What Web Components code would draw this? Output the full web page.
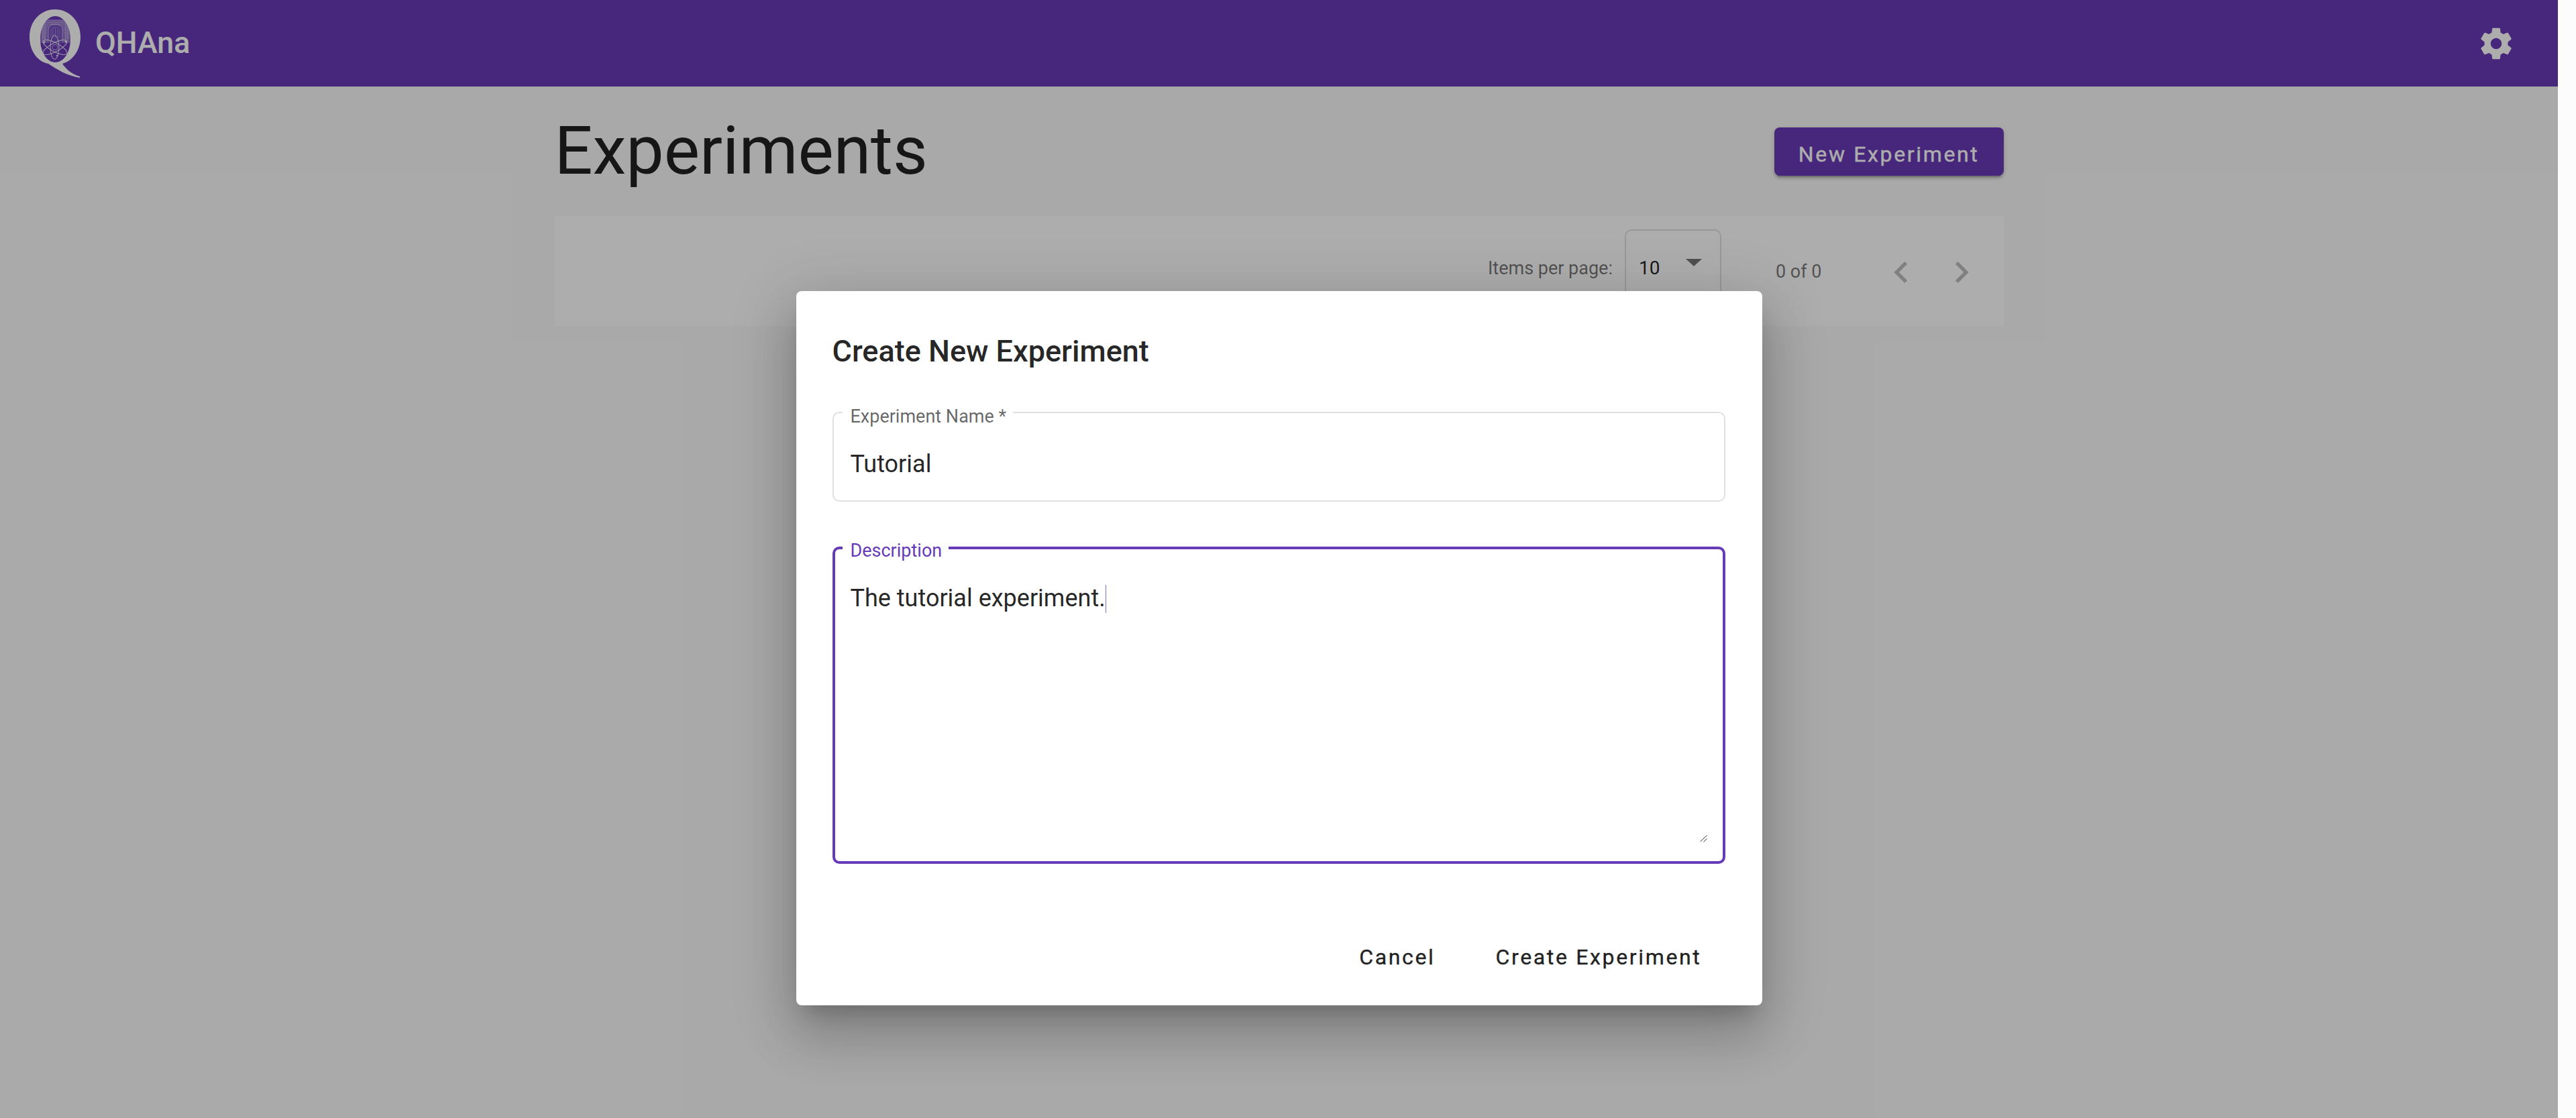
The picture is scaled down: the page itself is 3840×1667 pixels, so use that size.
<!DOCTYPE html>
<html lang="en"><head><meta charset="utf-8"><title>QHAna</title>
<style>
html,body{margin:0;padding:0;height:100%;overflow:hidden;background:#fafafa;font-family:Roboto,"Liberation Sans",sans-serif;}
</style></head><body>
<qh-app></qh-app>
<script>
function def(name, html){
  customElements.define(name, class extends HTMLElement{
    constructor(){super();const t=document.createElement('template');t.innerHTML=html;this.attachShadow({mode:'open'}).appendChild(t.content.cloneNode(true));}
  });
}
def('qh-logo',`<style>:host{display:block;width:84px;height:110px}svg{display:block}</style>
<svg width="84" height="110" viewBox="40 10 84 110">
 <defs><clipPath id="in"><ellipse cx="82.500" cy="58.500" rx="22.500" ry="34.500"/></clipPath></defs>
 <path fill="#fff" fill-rule="evenodd" d="M82 14C60 14 44 32 44 55C44 76 56 92 72 95C84 103 100 113 119 116L119 114C108 111 99 104 93 95C108 91 120 75 120 55C120 32 104 14 82 14ZM82.500 24C95 24 105 40 105 58.500C105 78 95 93 82.500 93C70 93 60 78 60 58.500C60 40 70 24 82.500 24Z"/>
 <g clip-path="url(#in)">
  <path fill="#fff" fill-opacity=".26" fill-rule="evenodd" d="M60 29H105V64H92V44Q92 38 82.500 38Q73 38 73 44V64H60Z"/>
  <path fill="#fff" fill-opacity=".1" d="M73 64V44Q73 38 82.500 38Q92 38 92 44V64Z"/>
  <g fill="none" stroke="#fff">
   <path stroke-opacity=".4" stroke-width="1" d="M62 31H103M62 33.500H103M62 36H103M62 39H72M93 39H103M62 42H70M94 42H103M62 45H70M94 45H103M62 48H70M95 48H103M62 51H69M95 51H103M62 54H69M96 54H103M62 57H68M96 57H103M64 30V62M67 30V62M98 30V62M101 30V62M72 60V44Q72 36 82.500 36Q93 36 93 44V60"/>
   <path stroke-opacity=".3" stroke-width="1" d="M76 56V46Q76 41 82.500 41Q89 41 89 46V56M79 44V56M82.500 42V56M86 44V56"/>
  </g>
 </g>
 <g fill="none" stroke="#fff" stroke-width="1">
  <ellipse cx="81.500" cy="70.500" rx="6.500" ry="18" stroke-opacity=".85"/>
  <ellipse cx="82" cy="70.500" rx="20" ry="6.500" transform="rotate(28 82 70.500)" stroke-opacity=".85"/>
  <ellipse cx="82" cy="70.500" rx="20" ry="6.500" transform="rotate(-28 82 70.500)" stroke-opacity=".85"/>
  <circle cx="82" cy="70.500" r="4" stroke-opacity=".6"/>
 </g>
 <g fill="#fff" fill-opacity=".8"><circle cx="66" cy="63" r="1.500"/><circle cx="98" cy="62" r="1.500"/><circle cx="85" cy="83" r="1.300"/></g>
</svg>`);
def('qh-gear',`<style>:host{display:block;width:56px;height:56px}svg{display:block;fill:#fff}</style>
<svg width="56" height="56" viewBox="0 0 24 24"><path d="M19.43 12.98c.04-.32.07-.64.07-.98s-.03-.66-.07-.98l2.11-1.65c.19-.15.24-.42.12-.64l-2-3.46c-.12-.22-.39-.3-.61-.22l-2.49 1c-.52-.4-1.08-.73-1.69-.98l-.38-2.65C14.46 2.18 14.25 2 14 2h-4c-.25 0-.46.18-.49.42l-.38 2.65c-.61.25-1.17.59-1.69.98l-2.49-1c-.23-.09-.49 0-.61.22l-2 3.46c-.13.22-.07.49.12.64l2.11 1.65c-.04.32-.07.65-.07.98s.03.66.07.98l-2.11 1.65c-.19.15-.24.42-.12.64l2 3.46c.12.22.39.3.61.22l2.49-1c.52.4 1.08.73 1.69.98l.38 2.65c.03.24.24.42.49.42h4c.25 0 .46-.18.49-.42l.38-2.65c.61-.25 1.17-.59 1.69-.98l2.49 1c.23.09.49 0 .61-.22l2-3.46c.12-.22.07-.49-.12-.64l-2.11-1.65zM12 15.500c-1.930 0-3.500-1.570-3.500-3.500s1.570-3.500 3.500-3.500 3.500 1.570 3.500 3.500-1.570 3.500-3.500 3.500z"/></svg>`);
def('qh-toolbar',`<style>
:host{display:flex;align-items:center;height:129px;box-sizing:border-box;background:#673ab7;color:#fff;padding:0 64px 0 40px;flex:none}
.brand{font:500 44.800px/52px Roboto,"Liberation Sans",sans-serif;margin-left:18px;margin-top:-1px;flex:1}
</style><qh-logo></qh-logo><div class="brand"><slot></slot></div><qh-gear></qh-gear>`);
def('qh-button',`<style>
:host{display:inline-block;box-sizing:border-box;height:72px;padding:0 32px;font:400 32px/72px Roboto,"Liberation Sans",sans-serif;-webkit-text-stroke:.4px currentColor;letter-spacing:2.65px;color:rgba(0,0,0,.87);white-space:nowrap}
:host([raised]){background:#673ab7;color:#fff;border-radius:8px;padding:8px 36px 0;line-height:64px;box-shadow:0 6px 2px -4px rgba(0,0,0,.2),0 4px 4px 0 rgba(0,0,0,.14),0 2px 10px 0 rgba(0,0,0,.12)}
</style><slot></slot>`);
def('qh-chevron',`<style>:host{display:block;width:64px;height:64px}svg{display:block;fill:rgba(0,0,0,.26)}</style>
<svg width="64" height="64" viewBox="0 0 24 24"><path d="M15.410 7.410L14 6l-6 6 6 6 1.410-1.410L10.830 12z"/></svg>`);
def('qh-chevron-right',`<style>:host{display:block;width:64px;height:64px}svg{display:block;fill:rgba(0,0,0,.26)}</style>
<svg width="64" height="64" viewBox="0 0 24 24"><path d="M10 6L8.590 7.410 13.170 12l-4.580 4.590L10 18l6-6z"/></svg>`);
def('qh-select',`<style>
:host{display:flex;box-sizing:border-box;width:144px;height:112px;border:2px solid rgba(0,0,0,.12);border-radius:10px;padding:39px 27px 0 19px;font:400 28px/33px Roboto,"Liberation Sans",sans-serif;color:rgba(0,0,0,.87);justify-content:space-between;align-items:flex-start}
.arrow{width:0;height:0;margin-top:3px;border-left:12px solid transparent;border-right:12px solid transparent;border-top:11px solid rgba(0,0,0,.54)}
</style><div><slot></slot></div><div class="arrow"></div>`);
def('qh-paginator',`<style>
:host{display:flex;justify-content:flex-end;align-items:flex-start;height:164px;background:#fff;font:400 27px/28px Roboto,"Liberation Sans",sans-serif;color:rgba(0,0,0,.54);padding-right:31px;box-sizing:border-box}
.label{margin-top:64px}
qh-select{margin:20px 0 0 18px}
.range{margin:69px 86px 0 81px}
qh-chevron{margin-top:52px}
qh-chevron-right{margin:52px 0 0 26px}
</style><div class="label">Items per page:</div><qh-select>10</qh-select><div class="range">0 of 0</div><qh-chevron></qh-chevron><qh-chevron-right></qh-chevron-right>`);
def('qh-page-header',`<style>
:host{display:flex;justify-content:space-between;align-items:flex-start;padding:46px 0 47px;height:193px;box-sizing:border-box}
h1{margin:0;font:400 100.400px/100px Roboto,"Liberation Sans",sans-serif;color:rgba(0,0,0,.87)}
qh-button{margin-top:15px}
</style><h1><slot></slot></h1><qh-button raised>New Experiment</qh-button>`);
def('qh-field',`<style>
:host{display:block;position:relative;box-sizing:border-box;height:var(--h,134px);border:2px solid #e0e0e0;border-radius:10px;padding:55px 25px 0;font:400 36px/42px Roboto,"Liberation Sans",sans-serif;color:rgba(0,0,0,.87)}
:host([focused]){border:4px solid #673ab7;padding:52px 23px 0}
.label{position:absolute;left:13px;top:-9px;padding:0 10px 0 12px;background:#fff;font:400 27px/28px Roboto,"Liberation Sans",sans-serif;color:rgba(0,0,0,.6)}
:host([focused]) .label{top:-12px;left:11px;color:#673ab7}
</style><span class="label"><slot name="label"></slot></span><slot></slot>`);
def('qh-grip',`<style>:host{position:absolute;right:23px;bottom:28px;width:11px;height:11px;display:block}svg{display:block}</style>
<svg width="11" height="11" viewBox="0 0 11 11"><path d="M0.500 10L10.500 0.500M5.500 10.500L10.500 5.500" stroke="#333" stroke-width="1" fill="none"/></svg>`);
def('qh-dialog',`<style>
:host{display:block;box-sizing:border-box;width:1440px;height:1065px;background:#fff;border-radius:8px;padding:64px 55px 0 54px;color:rgba(0,0,0,.87);
box-shadow:0 22px 30px -14px rgba(0,0,0,.2),0 48px 76px 6px rgba(0,0,0,.14),0 18px 92px 16px rgba(0,0,0,.12)}
h2{margin:0 0 64px;font:500 45px/52px Roboto,"Liberation Sans",sans-serif}
qh-field+qh-field{margin-top:67px}
.actions{display:flex;justify-content:flex-end;gap:26px;margin:103px 3px 0 0}
.caret{display:inline-block;width:1px;height:42px;background:#8a6fd0;vertical-align:-10px;margin-left:0}
.d{--h:473px}
</style>
<h2>Create New Experiment</h2>
<qh-field><span slot="label">Experiment Name *</span>Tutorial</qh-field>
<qh-field class="d" focused><span slot="label">Description</span>The tutorial experiment.<span class="caret"></span><qh-grip></qh-grip></qh-field>
<div class="actions"><qh-button>Cancel</qh-button><qh-button>Create Experiment</qh-button></div>`);
def('qh-app',`<style>
:host{display:flex;width:3840px;height:1667px;overflow:hidden}
main{position:relative;flex:1;display:flex;flex-direction:column;background:#fafafa;min-width:0}
.container{width:2160px;margin:0 auto}
.scroll{width:27px;flex:none;background:#fcfcfc}
.backdrop{position:absolute;inset:0;background:rgba(0,0,0,.32);display:flex;justify-content:center;align-items:flex-start;padding-top:434px;box-sizing:border-box}
</style>
<main>
 <qh-toolbar>QHAna</qh-toolbar>
 <div class="container"><qh-page-header>Experiments</qh-page-header><qh-paginator></qh-paginator></div>
 <div class="backdrop"><qh-dialog></qh-dialog></div>
</main><div class="scroll"></div>`);
</script>
</body></html>
